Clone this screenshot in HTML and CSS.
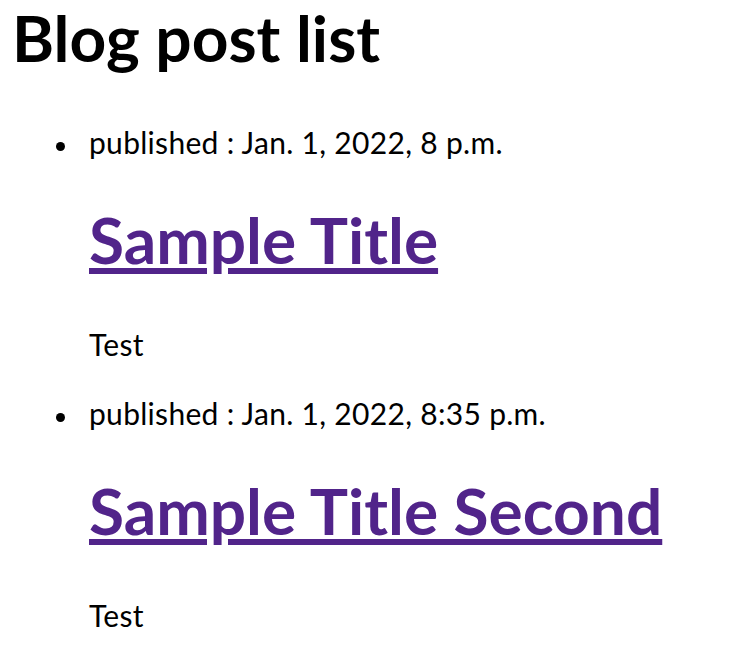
FILE: index.html
```html
<!DOCTYPE html>
<html>
<head>
<meta charset="utf-8">
<link rel="stylesheet" href="styles.css">
</head>
<body>
<h1 class="page-title">Blog post list</h1>
<ul class="posts">
  <li class="post">
    <div class="meta">published : Jan. 1, 2022, 8 p.m.</div>
    <h1 class="post-title"><a href="#">Sample Title</a></h1>
    <p class="post-body">Test</p>
  </li>
  <li class="post">
    <div class="meta">published : Jan. 1, 2022, 8:35 p.m.</div>
    <h1 class="post-title"><a href="#">Sample Title Second</a></h1>
    <p class="post-body">Test</p>
  </li>
</ul>
</body>
</html>
```
FILE: styles.css
```css
html, body {
  margin: 0;
  padding: 0;
  background: #ffffff;
  color: #000000;
  font-family: Lato, "Noto Sans", sans-serif;
}
body {
  padding: 0 0 0 12px;
}
.page-title {
  margin: 0;
  font-size: 64px;
  line-height: 76px;
  font-weight: 700;
}
.posts {
  margin: 48px 0 0 0;
  padding-left: 77px;
  list-style: none;
}
.post {
  font-size: 30px;
  line-height: 36px;
  letter-spacing: 0.3px;
}
.meta {
  margin: 0;
}
.meta::before {
  content: "";
  display: inline-block;
  width: 9px;
  height: 9px;
  border-radius: 50%;
  background: #000000;
  margin-left: -33px;
  margin-right: 24px;
  vertical-align: middle;
}
.post-title {
  margin: 42px 0 48px 0;
  font-size: 64px;
  line-height: 76px;
  font-weight: 700;
  letter-spacing: 0;
}
.post-title a {
  color: #51248a;
  text-decoration: underline;
}
.post-body {
  margin: 0 0 33px 0;
}
```
